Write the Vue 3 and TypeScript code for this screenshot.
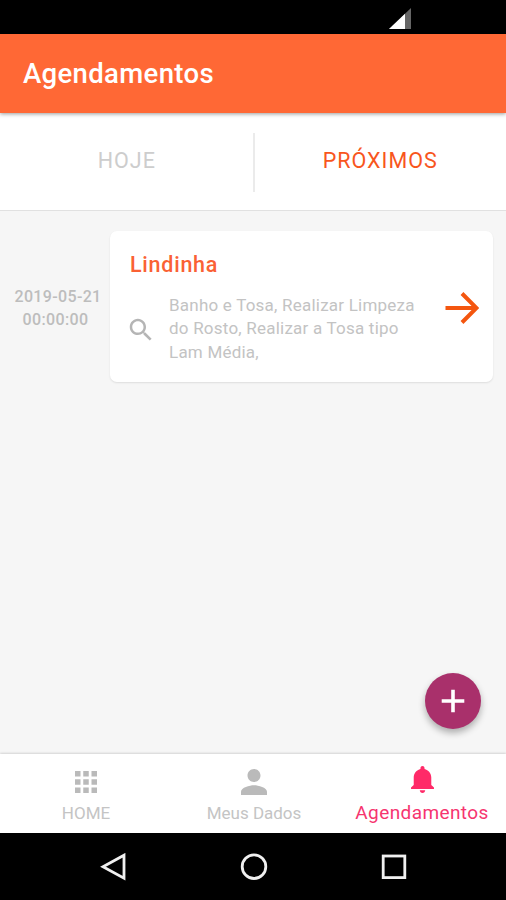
<script setup lang="ts">
import { ref } from 'vue'

interface Appointment {
  date: string
  time: string
  pet: string
  services: string
}

const activeTab = ref<'today' | 'next'>('next')

const appointments: Appointment[] = [
  {
    date: '2019-05-21',
    time: '00:00:00',
    pet: 'Lindinha',
    services: 'Banho e Tosa, Realizar Limpeza do Rosto, Realizar a Tosa tipo Lam Média,',
  },
]
</script>

<template>
  <div class="screen">
    <div class="status-bar">
      <svg class="signal" viewBox="0 0 22 21">
        <path d="M0 21L22 0V21z" fill="#666" />
        <path d="M0 21L16 5.7V21z" fill="#fff" />
      </svg>
    </div>

    <header class="app-bar">
      <h1 class="title">Agendamentos</h1>
    </header>

    <div class="tabs">
      <button class="tab" :class="{ active: activeTab === 'today' }" @click="activeTab = 'today'">HOJE</button>
      <span class="tab-divider"></span>
      <button class="tab" :class="{ active: activeTab === 'next' }" @click="activeTab = 'next'">PRÓXIMOS</button>
    </div>

    <main class="content">
      <div v-for="item in appointments" :key="item.date + item.pet" class="appointment">
        <div class="when">
          <span class="date">{{ item.date }}</span>
          <span class="time">{{ item.time }}</span>
        </div>
        <article class="card">
          <div class="details">
            <h2 class="pet">{{ item.pet }}</h2>
            <div class="services-row">
              <svg class="search" viewBox="0 0 24 24">
                <path d="M15.5 14h-.79l-.28-.27C15.41 12.59 16 11.11 16 9.5 16 5.91 13.09 3 9.5 3S3 5.91 3 9.5 5.91 16 9.5 16c1.61 0 3.09-.59 4.23-1.57l.27.28v.79l5 4.99L20.49 19l-4.99-5zm-6 0C7.01 14 5 11.99 5 9.5S7.01 5 9.5 5 14 7.01 14 9.5 11.99 14 9.5 14z" />
              </svg>
              <p class="services">{{ item.services }}</p>
            </div>
          </div>
          <svg class="arrow" viewBox="0 0 34 32">
            <path d="M0.5 16H31M17 1.5L31.5 16L17 30.5" />
          </svg>
        </article>
      </div>

      <button class="fab" aria-label="Adicionar">
        <svg viewBox="0 0 24 24"><path d="M12 .7v22.6M.7 12h22.6" /></svg>
      </button>
    </main>

    <nav class="bottom-nav">
      <a class="nav-item">
        <span class="nav-icon">
          <svg class="apps" viewBox="4 4 16 16">
            <path d="M4 8h4V4H4v4zm6 12h4v-4h-4v4zm-6 0h4v-4H4v4zm0-6h4v-4H4v4zm6 0h4v-4h-4v4zm6-10v4h4V4h-4zm-6 4h4V4h-4v4zm6 6h4v-4h-4v4zm0 6h4v-4h-4v4z" />
          </svg>
        </span>
        <span class="nav-label">HOME</span>
      </a>
      <a class="nav-item">
        <span class="nav-icon">
          <svg class="person" viewBox="4 4 16 16">
            <path d="M12 12c2.21 0 4-1.79 4-4s-1.79-4-4-4-4 1.79-4 4 1.79 4 4 4zm0 2c-2.67 0-8 1.34-8 4v2h16v-2c0-2.66-5.33-4-8-4z" />
          </svg>
        </span>
        <span class="nav-label">Meus Dados</span>
      </a>
      <a class="nav-item current">
        <span class="nav-icon">
          <svg class="bell" viewBox="3 2 17 20">
            <path d="M11.5 22c1.1 0 2-.9 2-2h-4c0 1.1.9 2 2 2zm6.5-6v-5.5c0-3.07-2.13-5.64-5-6.32V3.5c0-.83-.67-1.5-1.5-1.5S10 2.67 10 3.5v.68c-2.87.68-5 3.25-5 6.32V16l-2 2v1h17v-1l-2-2z" />
          </svg>
        </span>
        <span class="nav-label">Agendamentos</span>
      </a>
    </nav>

    <div class="system-nav">
      <svg viewBox="0 0 28 28"><path d="M24 2.2V25.2L3 13.7z" /></svg>
      <svg viewBox="0 0 28 28"><circle cx="14" cy="13.7" r="11.8" /></svg>
      <svg viewBox="0 0 28 28"><rect x="3.2" y="3" width="21.6" height="21.6" /></svg>
    </div>
  </div>
</template>

<style>
body {
  margin: 0;
}
</style>

<style scoped>
.screen {
  display: flex;
  flex-direction: column;
  width: 506px;
  height: 900px;
  overflow: hidden;
  background: #f6f6f6;
  font-family: Roboto, "Liberation Sans", sans-serif;
}

h1,
h2,
p {
  margin: 0;
}

button {
  border: 0;
  padding: 0;
  background: none;
  font-family: inherit;
}

svg {
  display: block;
}

.status-bar {
  display: flex;
  justify-content: flex-end;
  height: 34px;
  padding: 8px 95px 0 0;
  box-sizing: border-box;
  background: #000;
}

.signal {
  width: 22px;
  height: 21px;
}

.app-bar {
  display: flex;
  align-items: center;
  height: 78.5px;
  padding: 2px 0 0 23px;
  box-sizing: border-box;
  background: #ff6835;
  box-shadow: 0 1px 4px rgba(0, 0, 0, 0.4);
  z-index: 1;
}

.title {
  font-size: 27.5px;
  font-weight: 500;
  line-height: 32px;
  letter-spacing: 0.35px;
  color: #fff;
}

.tabs {
  display: flex;
  align-items: center;
  height: 98.5px;
  padding-left: 1px;
  box-sizing: border-box;
  border-bottom: 1.5px solid #e1e1e1;
  background: #fff;
}

.tab {
  flex: 1;
  padding-bottom: 1px;
  font-size: 21.5px;
  font-weight: 400;
  letter-spacing: 1px;
  color: #cdcdcd;
}

.tab.active {
  color: #f8561d;
}

.tab-divider {
  width: 2px;
  height: 59px;
  margin-top: 2px;
  background: #ebebeb;
}

.content {
  position: relative;
  flex: 1;
  padding: 20px 13px 0 7px;
}

.appointment {
  display: flex;
}

.when {
  display: flex;
  flex-direction: column;
  justify-content: center;
  width: 103px;
  padding: 2px 6px 0 0;
  box-sizing: border-box;
  font-size: 16px;
  font-weight: 500;
  line-height: 23px;
  letter-spacing: 0.35px;
  text-align: center;
  color: #bdbdbd;
}

.date {
  padding-left: 5px;
}

.card {
  display: flex;
  justify-content: space-between;
  align-items: center;
  width: 383px;
  height: 151px;
  padding: 2px 14px 0 20px;
  box-sizing: border-box;
  border-radius: 7px;
  background: #fff;
  box-shadow: 0 1px 2px rgba(0, 0, 0, 0.1);
}

.pet {
  padding-top: 1px;
  font-size: 21.5px;
  font-weight: 500;
  line-height: 26px;
  letter-spacing: 0.75px;
  color: #fa6134;
}

.services-row {
  display: flex;
  align-items: center;
  gap: 13px;
  margin-top: 16px;
}

.search {
  width: 30px;
  height: 30px;
  margin: 3px 0 0 -4px;
  fill: #b5b5b5;
}

.services {
  width: 256px;
  font-size: 17px;
  line-height: 23.2px;
  letter-spacing: 0.22px;
  color: #c3c3c3;
}

.arrow {
  width: 34px;
  height: 32px;
  fill: none;
  stroke: #f4560f;
  stroke-width: 4;
}

.fab {
  position: absolute;
  right: 25px;
  bottom: 25px;
  display: flex;
  align-items: center;
  justify-content: center;
  width: 56px;
  height: 56px;
  border-radius: 50%;
  background: #a9306b;
  box-shadow: 0 4px 7px rgba(0, 0, 0, 0.3);
}

.fab svg {
  width: 24px;
  height: 24px;
  stroke: #fff;
  stroke-width: 3.6;
}

.bottom-nav {
  display: flex;
  height: 79px;
  padding-left: 2px;
  box-sizing: border-box;
  background: #fff;
  box-shadow: 0 -1px 2px rgba(0, 0, 0, 0.14);
  z-index: 1;
}

.nav-item {
  flex: 1 1 0;
  min-width: 0;
  display: flex;
  flex-direction: column;
  align-items: center;
  color: #c4c4c4;
}

.nav-icon {
  display: flex;
  align-items: center;
  height: 55px;
  margin-bottom: -7px;
}

.nav-icon svg {
  fill: #bababa;
}

.apps {
  width: 22px;
  height: 22px;
}

.person {
  width: 26px;
  height: 26px;
}

.bell {
  width: 23px;
  height: 27px;
}

.nav-label {
  font-size: 17px;
  line-height: 22px;
  white-space: nowrap;
}

.current {
  color: #f6346f;
}

.current .nav-icon {
  height: 51px;
  margin-bottom: -3px;
}

.current .nav-icon svg {
  fill: #ff2a68;
}

.current .nav-label {
  font-size: 19px;
  letter-spacing: 0.4px;
}

.system-nav {
  display: flex;
  justify-content: center;
  align-items: center;
  gap: 112px;
  height: 67px;
  padding-left: 1px;
  box-sizing: border-box;
  background: #000;
}

.system-nav svg {
  width: 28px;
  height: 28px;
  fill: none;
  stroke: #f0f0f0;
  stroke-width: 2.8;
}
</style>
